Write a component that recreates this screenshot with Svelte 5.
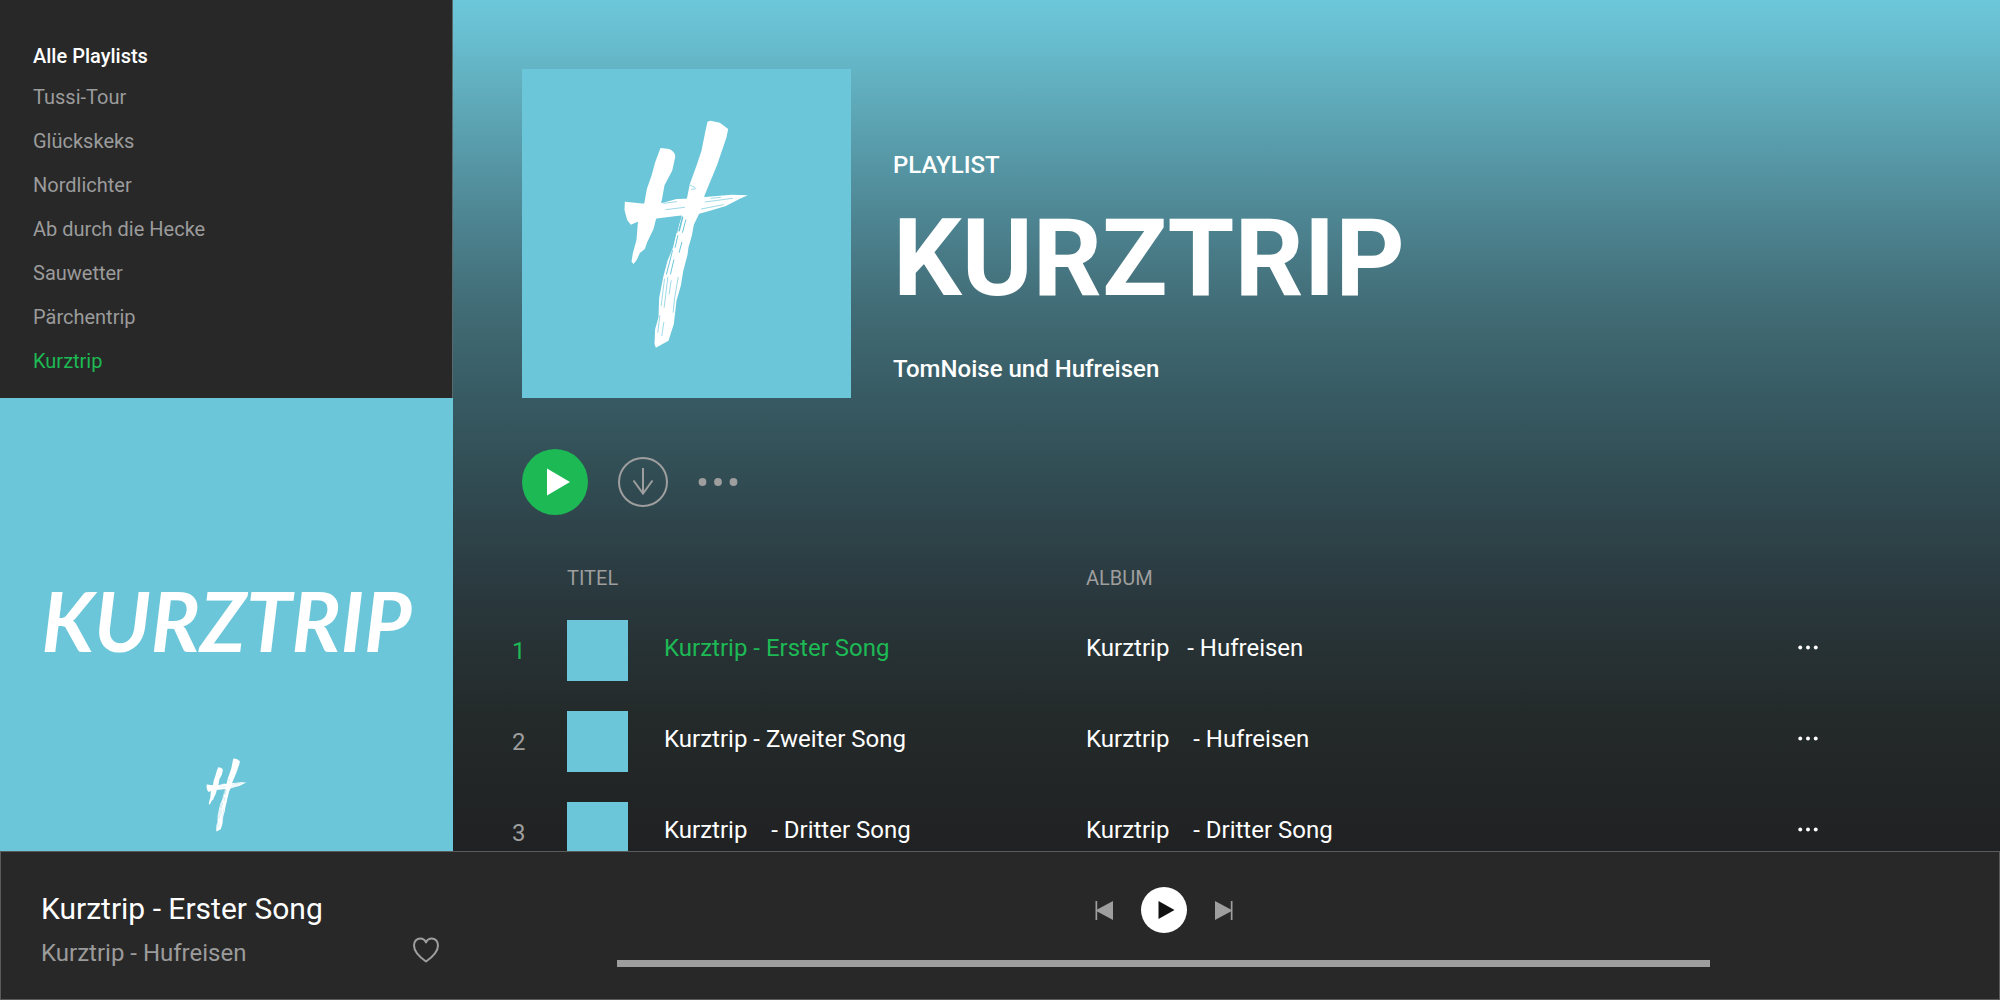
<script>
  const playlists = [
    'Tussi-Tour',
    'Glückskeks',
    'Nordlichter',
    'Ab durch die Hecke',
    'Sauwetter',
    'Pärchentrip',
    'Kurztrip',
  ];

  // the spacing inside the names is part of the data
  const songs = [
    { title: 'Kurztrip - Erster Song', album: 'Kurztrip   - Hufreisen' },
    { title: 'Kurztrip - Zweiter Song', album: 'Kurztrip    - Hufreisen' },
    { title: 'Kurztrip    - Dritter Song', album: 'Kurztrip    - Dritter Song' },
  ];

  let activePlaylist = $state('Kurztrip');
  let current = $state(0);
  let progress = $state(0);

  function step(n) {
    current = (current + n + songs.length) % songs.length;
  }
</script>

{#snippet brushMark(className)}
  <svg class={className} viewBox="340 175 380 690" aria-hidden="true">
    <g fill="#fff">
      <path d="M452 262 L478 265 Q498 275 496 290 L487 330 L464 374 L456 418 L440 470 L431 505 L412 545 L405 565 L390 577 L381 597 L371 610 L365 603 L369 578 L380 538 L384 488 L404 425 L411 385 L425 345 L436 305 Z" />
      <path d="M593 183 L602 180 L630 186 L655 205 L650 230 L622 312 L585 402 L570 455 L552 492 L546 525 L536 560 L533 582 L520 632 L513 675 L500 720 L492 790 L476 840 L438 861 L434 850 L436 805 L446 770 L448 712 L460 650 L473 600 L490 560 L500 515 L516 465 L532 410 L540 370 L561 312 L575 270 L586 215 Z" />
      <path d="M345 423 L405 429 L460 426 L500 415 L530 414 L595 408 L665 402 L714 404 L690 414 L648 436 L598 451 L565 460 L500 466 L435 474 L380 485 L363 492 L352 478 L344 448 Z" />
    </g>
    <g fill="none" stroke="#6cc6d9" stroke-width="2" stroke-linecap="round">
      <path d="M462 428 L500 423 M468 447 L524 440 M586 424 L668 413 M575 445 L640 432 M604 413 L632 410" />
      <path d="M510 470 L500 515 M518 470 L508 510" stroke-width="5" />
      <path d="M497 522 L485 562 M528 478 L518 515" stroke-width="3" />
      <path d="M504 525 L496 560 M516 545 L508 575 M488 570 L470 640 M492 598 L482 640" stroke-width="3" />
      <path d="M464 655 L454 735 M474 650 L463 740 M484 660 L478 700 M505 650 L494 715 L490 755" />
      <path d="M450 765 L444 815 M462 785 L456 825 M541 374 L555 380 M545 386 L558 384" />
    </g>
  </svg>
{/snippet}

{#snippet dots()}
  <svg viewBox="0 0 40 10" fill="currentColor" aria-hidden="true">
    <circle cx="4.5" cy="5" r="3.9" />
    <circle cx="20" cy="5" r="3.9" />
    <circle cx="35.5" cy="5" r="3.9" />
  </svg>
{/snippet}

<div class="app">
  <aside class="sidebar">
    <nav class="playlists">
      <h2>Alle Playlists</h2>
      <ul>
        {#each playlists as name}
          <li>
            <a href="#playlist" class:active={name === activePlaylist} onclick={() => (activePlaylist = name)}>{name}</a>
          </li>
        {/each}
      </ul>
    </nav>
    <div class="now-cover">
      <span class="wordmark">KURZTRIP</span>
      {@render brushMark('mark-small')}
    </div>
  </aside>

  <main>
    <header class="hero">
      <div class="cover">
        {@render brushMark('mark-large')}
      </div>
      <div class="hero-text">
        <p>PLAYLIST</p>
        <h1>KURZTRIP</h1>
        <p>TomNoise und Hufreisen</p>
      </div>
    </header>

    <div class="actions">
      <button class="play" aria-label="Abspielen">
        <svg viewBox="0 0 66 66" width="66" height="66"><path d="M25 19.5 48 33 25 46.5Z" fill="#fff" /></svg>
      </button>
      <button class="download" aria-label="Herunterladen">
        <svg viewBox="0 0 50 50" width="50" height="50" fill="none" stroke="currentColor" stroke-width="2">
          <circle cx="25" cy="25" r="24" />
          <path d="M25 11v25.5M15.500 23.500 25 36.500 34.500 23.500" />
        </svg>
      </button>
      <button class="more" aria-label="Mehr">{@render dots()}</button>
    </div>

    <table>
      <thead>
        <tr>
          <th class="col-number"></th>
          <th class="col-thumb">TITEL</th>
          <th class="col-title"></th>
          <th>ALBUM</th>
          <th class="col-menu"></th>
        </tr>
      </thead>
      <tbody>
        {#each songs as song, i}
          <tr class:active={i === current}>
            <td class="number">{i + 1}</td>
            <td><div class="thumb"></div></td>
            <td class="text title">{song.title}</td>
            <td class="text">{song.album}</td>
            <td class="text"><button class="row-menu" aria-label="Optionen">{@render dots()}</button></td>
          </tr>
        {/each}
      </tbody>
    </table>
  </main>

  <footer class="player">
    <div class="info">
      <div>
        <div class="song">Kurztrip - Erster Song</div>
        <div class="artist">Kurztrip - Hufreisen</div>
      </div>
      <button class="like" aria-label="Gefällt mir">
        <svg viewBox="0 0 26 26" width="26" height="26" fill="none" stroke="currentColor" stroke-width="2" stroke-linejoin="round">
          <path d="M13 24.500C8 21 1 15.500 1 8.500 1 4 4 1.500 7.200 1.500 10 1.500 12 3 13 5.500 14 3 16 1.500 18.800 1.500 22 1.500 25 4 25 8.500 25 15.500 18 21 13 24.500Z" />
        </svg>
      </button>
    </div>
    <div class="playback">
      <div class="controls">
        <button aria-label="Zurück" onclick={() => step(-1)}>
          <svg viewBox="0 0 18 19" width="18" height="19" fill="currentColor"><path d="M.5 0h1.700v8.600L18 0v19L2.200 10.400V19H.5z" /></svg>
        </button>
        <button class="toggle" aria-label="Wiedergabe">
          <svg viewBox="0 0 46 46" width="46" height="46"><path d="M17.500 14 33.500 23 17.500 32Z" fill="#111" /></svg>
        </button>
        <button aria-label="Weiter" onclick={() => step(1)}>
          <svg viewBox="0 0 18 19" width="18" height="19" fill="currentColor"><path d="M17.500 0h-1.700v8.600L0 0v19l15.800-8.600V19h1.700z" /></svg>
        </button>
      </div>
      <input class="progress" type="range" min="0" max="100" bind:value={progress} aria-label="Fortschritt" />
    </div>
  </footer>
</div>

<style>
  :global(body) {
    margin: 0;
    background: #282828;
  }

  .app {
    display: grid;
    grid-template-columns: 453px minmax(0, 1fr);
    grid-template-rows: minmax(0, 1fr) auto;
    height: 100vh;
    overflow: hidden;
    font-family: Roboto, sans-serif;
    color: #fff;
  }

  h1,
  h2,
  p,
  ul {
    margin: 0;
    padding: 0;
  }

  button {
    display: block;
    flex-shrink: 0;
    padding: 0;
    border: none;
    background: transparent;
    color: #9e9e9e;
    cursor: pointer;
  }

  svg {
    display: block;
  }

  .sidebar {
    overflow: hidden;
    background: #282828;
  }

  .playlists {
    padding: 44px 33px 15px;
    border-right: 1px solid #56696c;
  }

  .playlists h2 {
    margin-bottom: 7px;
    font-size: 20px;
    font-weight: 500;
    line-height: 24px;
  }

  .playlists ul {
    list-style: none;
  }

  .playlists a {
    display: block;
    font-size: 20px;
    line-height: 44px;
    color: #9b9b9b;
    text-decoration: none;
  }

  .playlists a.active {
    color: #1db954;
  }

  .now-cover {
    display: flex;
    flex-direction: column;
    align-items: center;
    justify-content: flex-end;
    gap: 90px;
    box-sizing: border-box;
    aspect-ratio: 1;
    padding-bottom: 19px;
    background: #6cc6d9;
  }

  .wordmark {
    font-family: Lato, sans-serif;
    font-size: 82px;
    font-style: italic;
    font-weight: 700;
    line-height: 96px;
  }

  .mark-small {
    width: 41px;
    height: 74px;
  }

  .mark-large {
    width: 127px;
    height: 230px;
  }

  main {
    overflow: hidden;
    padding-top: 69px;
    background: linear-gradient(
      #6cc7da 0%,
      #67bccd 5%,
      #5a9fae 16%,
      #4d8491 26%,
      #416c76 36%,
      #375a62 47%,
      #30484f 59%,
      #29373c 71%,
      #242a2a 84%,
      #202123 100%
    );
  }

  .hero {
    display: flex;
    gap: 42px;
    padding-left: 69px;
  }

  .cover {
    display: flex;
    align-items: center;
    justify-content: center;
    flex-shrink: 0;
    width: 329px;
    height: 329px;
    background: #6cc6d9;
  }

  .hero-text {
    display: flex;
    flex-direction: column;
    justify-content: flex-end;
    padding-bottom: 15px;
  }

  .hero-text p {
    font-size: 24px;
    font-weight: 500;
    line-height: 28px;
  }

  .hero-text h1 {
    margin: 24px 0 42px;
    font-size: 108px;
    font-weight: 700;
    line-height: 110px;
  }

  .actions {
    display: flex;
    align-items: center;
    gap: 30px;
    padding: 51px 69px;
  }

  .play {
    border-radius: 50%;
    background: #1db954;
  }

  .more {
    width: 40px;
  }

  table {
    width: calc(100% - 241px);
    margin-left: 59px;
    border-collapse: collapse;
    table-layout: fixed;
  }

  th {
    padding: 0 0 15px;
    font-size: 20px;
    font-weight: 400;
    line-height: 24px;
    text-align: left;
    color: #9e9e9e;
  }

  .col-number {
    width: 55px;
  }

  .col-thumb {
    width: 97px;
  }

  .col-title {
    width: 422px;
  }

  .col-menu {
    width: 20px;
  }

  td {
    box-sizing: border-box;
    height: 91px;
    padding: 0;
    font-size: 24px;
    line-height: 28px;
    white-space: pre;
  }

  td.text {
    padding-bottom: 6px;
  }

  .number {
    color: #9e9e9e;
  }

  .active .number,
  .active .title {
    color: #1db954;
  }

  .thumb {
    width: 61px;
    height: 61px;
    background: #6cc6d9;
  }

  .row-menu {
    width: 20px;
    color: #fff;
  }

  .player {
    grid-column: 1 / -1;
    display: flex;
    align-items: flex-start;
    border: 1px solid #5a5c5c;
    background: #282828;
  }

  .info {
    display: flex;
    align-items: flex-end;
    justify-content: space-between;
    box-sizing: border-box;
    width: 438px;
    padding: 39px 0 32px 40px;
  }

  .song {
    margin-bottom: 12px;
    font-size: 30px;
    line-height: 36px;
  }

  .artist {
    font-size: 24px;
    line-height: 28px;
    color: #9b9b9b;
  }

  .like {
    padding-bottom: 4px;
  }

  .playback {
    flex: 1;
    padding: 35px 289px 0 178px;
  }

  .controls {
    display: flex;
    align-items: center;
    justify-content: center;
    gap: 28px;
    margin-bottom: 27px;
  }

  .toggle {
    border-radius: 50%;
    background: #fff;
  }

  .progress {
    display: block;
    width: 100%;
    height: 7px;
    margin: 0;
    appearance: none;
    background: #9e9e9e;
    cursor: pointer;
  }

  .progress::-webkit-slider-thumb {
    appearance: none;
    width: 7px;
    height: 7px;
    background: #9e9e9e;
  }
</style>
